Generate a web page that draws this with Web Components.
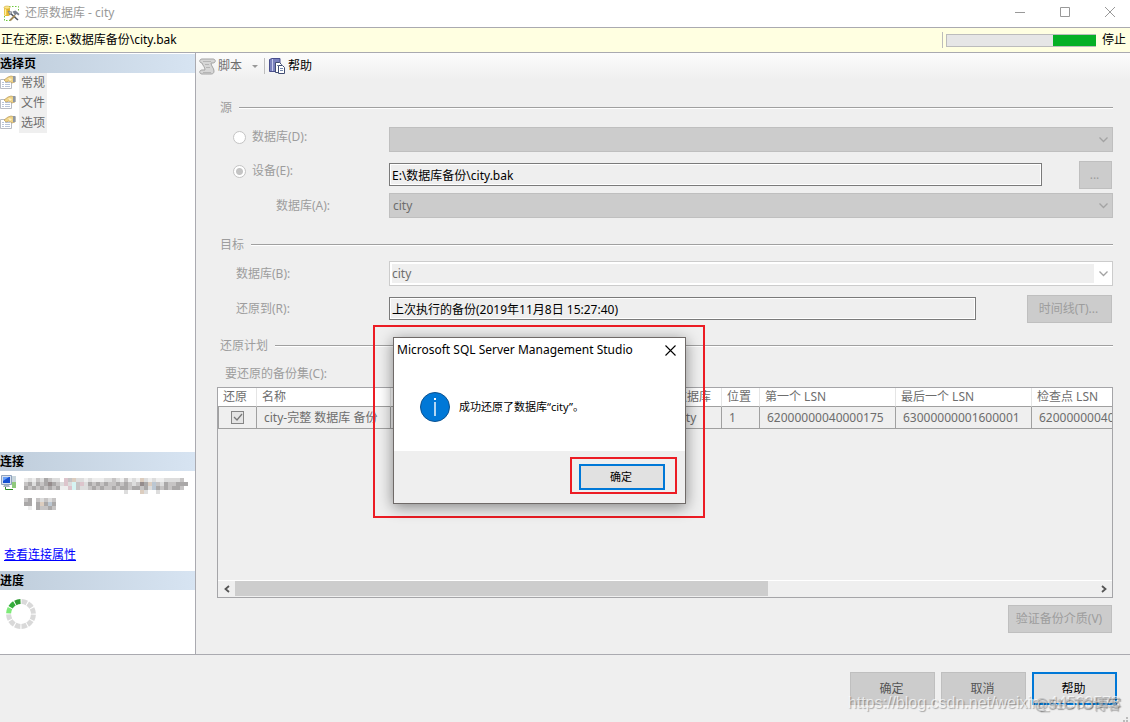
<!DOCTYPE html>
<html lang="zh-CN">
<head>
<meta charset="utf-8">
<title>还原数据库 - city</title>
<style>
  html, body { margin: 0; }
  body { font: 12px/20px "Noto Sans", "Noto Sans CJK SC", sans-serif; color: #000; background: #efefef; }
</style>
</head>
<body>
<restore-window></restore-window>

<script>
const define = (name, html, setup) => {
  const template = document.createElement('template');
  template.innerHTML = '<style>*{box-sizing:border-box}[hidden]{display:none}</style>' + html;
  customElements.define(name, class extends HTMLElement {
    constructor() {
      super();
      this.attachShadow({ mode: 'open' }).append(template.content.cloneNode(true));
      if (setup) setup(this.shadowRoot, this);
    }
  });
};

/* Window caption with its three controls */
define('title-bar', `
<style>
  :host { display: flex; align-items: center; height: 28px; background: #fff; border-bottom: 1px solid #aaaab0; color: #999; padding-left: 3px; }
  svg { display: block; }
  h1 { font: inherit; margin: 0 auto 0 5px; padding-bottom: 2px; }
  button { width: 45px; height: 27px; padding: 0 0 4px; border: 0; background: none; display: grid; place-items: center; }
  button:last-child { margin-right: -3px; width: 46px; }
</style>
<svg width="17" height="17" viewBox="0 0 17 17">
  <path d="M6 1.500H15.500V6M1.500 11V15.500H7" fill="none" stroke="#6fc83c" stroke-dasharray="1.500 1.500"/>
  <path d="M1 2.500v7c0 2 6 2 6 0v-7z" fill="#e8b92e"/><path d="M2.500 3v7" stroke="#fff0a0" stroke-width="1.500"/><ellipse cx="4" cy="2.500" rx="3" ry="1.500" fill="#fbe78a" stroke="#c99a20" stroke-width=".5"/>
  <path d="M7 8l8 7" stroke="#4c5563" stroke-width="1.600"/><path d="M9.500 6.500l3-1 4 3.500-1 1.500-2-1.500-1.500 1.500z" fill="#7a828e"/><path d="M5 6l4 1-2 3z" fill="#b9bec6" stroke="#66707c" stroke-width=".6"/><path d="M7 15.500l5-5" stroke="#a08a58" stroke-width="1.800"/>
</svg>
<h1>还原数据库 - city</h1>
<button aria-label="最小化"><svg width="10" height="10"><path d="M0 5.500H10" stroke="#999"/></svg></button>
<button aria-label="最大化"><svg width="10" height="10"><path d="M.5.5h9v9h-9z" fill="none" stroke="#999"/></svg></button>
<button aria-label="关闭"><svg width="10" height="10"><path d="M0 0L10 10M10 0L0 10" stroke="#999"/></svg></button>
`);

/* Yellow strip: what is running, and how far along it is */
define('status-strip', `
<style>
  :host { display: flex; align-items: center; height: 25px; background: #ffffe1; border-bottom: 1px solid #aaaab0; padding: 0 4px 0 1px; }
  span { flex: 1; }
  .bar { width: 154px; height: 16px; border-left: 1px solid #bcbcbc; padding-left: 3px; }
  .track { height: 13px; margin-top: 2px; border: 1px solid #bcbcbc; border-right: 0; background: linear-gradient(to right, #e6e6e6 71%, #06b025 71%); }
  button { font: inherit; border: 0; background: none; padding: 0; margin-left: 6px; }
</style>
<span><slot></slot></span>
<div class="bar"><div class="track" role="progressbar" aria-label="还原进度"></div></div>
<button>停止</button>
`);

/* Sidebar block: blue heading above whatever is passed in */
define('side-section', `
<style>
  :host { display: block; }
  h2 { margin: 0; height: 19px; font: bold 12px/19px "Noto Sans", "Noto Sans CJK SC", sans-serif; background: linear-gradient(to right, #bfcddb, #d7e4f2); }
</style>
<h2><slot name="heading"></slot></h2>
<slot></slot>
`);

define('page-link', `
<style>
  :host { display: flex; align-items: center; height: 20px; color: #6d6d6d; }
  a { color: inherit; text-decoration: none; background: #efefef; padding: 0 2px; margin-left: 3px; }
</style>
<svg width="16" height="16" viewBox="0 0 16 16">
  <path d="M.5 4.500h11v9H.5z" fill="#fff" stroke="#b8bcc4"/><path d="M2 7.500h2M5 7.500h5M2 9.500h2M5 9.500h5M2 11.500h2M5 11.500h5" stroke="#b7c4d8"/>
  <path d="M4 5l4-3 3-1 4 1v5l-3 1-3-2-3 1z" fill="#efd387" stroke="#b79a5c" stroke-width=".7"/><path d="M8 3l4 1-2 2" fill="#fff4c6"/><path d="M13 1h2.500v6H13z" fill="#8d97a3"/>
</svg>
<a href="#"><slot></slot></a>
`);

/* Server name shown as a mosaic of four-pixel cells */
define('masked-name', `
<style>:host { display: block; } svg { display: block; }</style>
<svg width="164" height="32" role="img" aria-label="已隐藏的连接名称"></svg>
`, root => {
  const shades = { a: '#eeeeee', b: '#dddddd', c: '#c6c4c4', d: '#aaa8a8', e: '#958c8c', p: '#ddc5cc', g: '#d6f4f2', h: '#dccdbf', s: '#bcc7d2' };
  const rows = [
    'abacbdcbb.pchbbabaaabbcbacabahbabaabbbbc',
    'cdbdcdedcbpbgcpbdcdcdccdcdcbcedhscbdccddd',
    'dcdcdcdcdaapgcbbcdcdccdcddcddcdbsdcdcddc',
    '.........................b...hb..b......',
    '',
    'cd.cbcbc', 'dd.dhdsd', '.a.dccdc'];
  root.querySelector('svg').innerHTML = rows.map((row, y) => [...row].map((c, x) =>
    shades[c] ? `<rect x="${x * 4}" y="${y * 4}" width="4" height="4" fill="${shades[c]}"/>` : '').join('')).join('');
});

define('progress-ring', `
<style>:host { display: block; } svg { display: block; }</style>
<svg width="30" height="30" viewBox="-15 -15 30 30" role="img" aria-label="正在进行"></svg>
`, root => {
  const colours = { 9: '#7dea77', 10: '#34ad3b', 11: '#2f9c32' };
  let html = '';
  for (let i = 0; i < 12; i++)
    html += `<path d="M.6 -12.400A12.400 12.400 0 0 1 5.800 -11" transform="rotate(${i * 30})" fill="none" stroke="${colours[i] || '#d9d9d9'}" stroke-width="5"/>`;
  root.querySelector('svg').innerHTML = html;
});

define('side-panel', `
<style>
  :host { display: flex; flex-direction: column; width: 196px; flex: none; background: #fff; border-right: 1px solid #aaaab0; padding-top: 1px; }
  .pages { flex: 1; }
  .server { display: flex; gap: 6px; padding: 4px 0 0 1px; height: 74px; }
  .server masked-name { padding-top: 3px; }
  .props { display: block; width: max-content; margin: 0 0 6px 4px; color: #00f; }
  progress-ring { margin: 9px 0 25px 6px; }
</style>
<side-section class="pages"><span slot="heading">选择页</span>
  <page-link>常规</page-link><page-link>文件</page-link><page-link>选项</page-link>
</side-section>
<side-section><span slot="heading">连接</span>
  <div class="server">
    <svg width="17" height="17" viewBox="0 0 17 17"><path d="M.5.5h10v9H.5z" fill="#d7e0ee" stroke="#8fa2bd"/><path d="M2 2h7v6H2z" fill="#1650d0"/><path d="M2 2h6L2 6z" fill="#69a2fa"/><path d="M3 10h5l1 2H2z" fill="#a6b2c2"/><path d="M11 1h4v12h-4z" fill="#c9d6dc"/><path d="M11 7h4v6h-4z" fill="#8fc97d"/><path d="M4.500 12v2.500H12" fill="none" stroke="#2b8a22"/></svg>
    <masked-name></masked-name>
  </div>
  <a class="props" href="#">查看连接属性</a>
</side-section>
<side-section><span slot="heading">进度</span><progress-ring></progress-ring></side-section>
`);

define('tool-strip', `
<style>
  :host { display: flex; align-items: center; height: 26px; padding-left: 3px; background: linear-gradient(#fcfcfc, #efefef); }
  button { display: flex; align-items: center; gap: 2px; font: inherit; border: 0; background: none; padding: 0; color: #000; }
  button:disabled { color: #6d6d6d; }
  .drop { margin: 0 6px 0 10px; }
  i { width: 1px; height: 16px; background: #bdbdbd; margin-right: 4px; }
</style>
<button disabled><svg width="17" height="17" viewBox="0 0 17 17"><path d="M3 1h11c3 0 3 4 0 4h-2c0 3 3 5 3 8 0 2-1 3-3 3H3c-3 0-3-4 0-4h3C6 9 4 8 3 5 0 5 0 1 3 1z" fill="#d6d6d6" stroke="#a4a4a4"/><path d="M4 3.500h8M6 6.500h4M7 9.500h4M4 14.500h8" stroke="#b5b5b5"/></svg>脚本</button>
<svg class="drop" width="6" height="3"><path d="M0 0h6L3 3z" fill="#999"/></svg><i></i>
<button><svg width="17" height="17" viewBox="0 0 17 17"><path d="M.5 1.500L3 .5h8v13H.5z" fill="#7980bd" stroke="#484e8c"/><path d="M3.500 1v12" stroke="#c7cbeb"/><path d="M6.500 4.500h4l2 2v8h-6z" fill="#fff" stroke="#414d73"/><path d="M9.500 7.500h4l2 2v6h-6z" fill="#fff" stroke="#414d73"/><path d="M11 10.500h3M11 12.500h3M8 7.500h1" stroke="#7588ad"/></svg>帮助</button>
`);

define('group-title', `
<style>
  :host { display: flex; align-items: center; gap: 7px; height: 20px; padding-left: 3px; color: #9d9d9d; }
  :host::after { content: ""; flex: 1; height: 2px; background: linear-gradient(#a0a0a0 50%, #fff 50%); }
</style>
<slot></slot>
`);

/* Push button; "primary" draws the blue focus frame */
define('push-button', `
<style>
  :host { display: block; height: 28px; }
  button { display: block; width: 100%; height: 100%; padding: 0 2px 0 0; font: inherit; color: inherit; border: 1px solid #bfbfbf; background: #ccc; }
  :host([primary]) button { border: 2px solid #0078d7; background: #e1e1e1; }
</style>
<button><slot></slot></button>
`, (root, host) => { root.querySelector('button').disabled = host.hasAttribute('disabled'); });

define('backup-table', `
<style>
  :host { display: flex; flex-direction: column; border: 1px solid #a5a5a8; color: #6d6d6d; min-width: 0; }
  .view { flex: 1; overflow: hidden; }
  table { border-collapse: separate; border-spacing: 0; table-layout: fixed; width: 950px; }
  th, td { font-weight: normal; text-align: left; padding: 0; border-bottom: 1px solid #a0a0a0; border-right: 1px solid #a0a0a0; white-space: nowrap; overflow: hidden; }
  th { height: 19px; line-height: 18px; background: #fff; border-right-color: #e5e5e5; padding-left: 5px; }
  td { height: 22px; line-height: 20px; padding-left: 7px; }
  td:first-child { padding: 0 0 0 12px; border-left: 1px solid #a0a0a0; }
  input { appearance: none; display: block; margin: 0; width: 13px; height: 13px; border: 1px solid #858585; background: #e4e4e4; }
  .tick { position: relative; display: block; width: 13px; }
  .tick svg { position: absolute; inset: 0; }
  .scroll { display: flex; height: 17px; border-top: 1px solid #fff; }
  .scroll button { width: 17px; border: 0; padding: 0; background: none; display: grid; place-items: center; }
  .track { flex: 1; padding-bottom: 1px; }
  .thumb { width: 62%; height: 100%; background: #cdcdcd; }
</style>
<div class="view"><table>
  <colgroup><col style="width:39px"><col style="width:134px"><col style="width:279px"><col style="width:52px"><col style="width:38px"><col style="width:136px"><col style="width:136px"><col style="width:136px"></colgroup>
  <thead><tr><th>还原</th><th>名称</th><th></th><th>数据库</th><th>位置</th><th>第一个 LSN</th><th>最后一个 LSN</th><th>检查点 LSN</th></tr></thead>
  <tbody><tr><td><label class="tick"><input type="checkbox" checked disabled aria-label="还原"><svg width="13" height="13"><path d="M3 6l3 3 5-6" fill="none" stroke="#777" stroke-width="1.300"/></svg></label></td><td>city-完整 数据库 备份</td><td></td><td>city</td><td>1</td><td>62000000040000175</td><td>63000000001600001</td><td>62000000040000175</td></tr></tbody>
</table></div>
<div class="scroll">
  <button aria-label="向左滚动"><svg width="8" height="8"><path d="M6 1L2.500 4 6 7" fill="none" stroke="#555" stroke-width="1.800"/></svg></button>
  <div class="track"><div class="thumb"></div></div>
  <button aria-label="向右滚动"><svg width="8" height="8"><path d="M2 1l3.500 3L2 7" fill="none" stroke="#555" stroke-width="1.800"/></svg></button>
</div>
`);

define('restore-form', `
<style>
  :host { display: flex; flex-direction: column; flex: 1; padding: 19px 17px 21px 21px; min-width: 0; color: #9d9d9d; }
  .row { display: flex; align-items: center; }
  .name { width: 172px; flex: none; display: flex; align-items: center; height: 20px; padding-left: 19px; }
  .radio { padding-left: 16px; gap: 6px; align-self: flex-start; }
  .deep { padding-left: 59px; }
  .source, .target { display: flex; flex-direction: column; }
  .source { gap: 4px; margin: 9px 0 17px; }
  .source .device { margin-top: 5px; }
  .target { gap: 9px; margin: 6px 0 13px; }
  input[type=radio] { appearance: none; margin: 0; width: 13px; height: 13px; border: 1px solid #c4c4c4; border-radius: 50%; background: #fff; }
  input[type=radio]:checked { background: radial-gradient(#c4c4c4 3px, #fff 4px); }
  input[type=text] { font: inherit; color: #000; height: 23px; min-width: 0; flex: 1; margin: 0 0 1px; padding: 0 2px; border: 1px solid #7a7a7a; box-shadow: inset 0 0 0 1px #fff; background: #efefef; outline: 0; }
  .combo { position: relative; flex: 1; height: 25px; }
  select { appearance: none; display: block; width: 100%; height: 100%; font: inherit; color: #6d6d6d; opacity: 1; padding: 0 20px 0 3px; border: 1px solid #bfbfbf; border-radius: 0; background: #ccc; }
  .edit select { border-color: #ccc; background: linear-gradient(to right, #efefef calc(100% - 17px), #fff 0) content-box, #fff; padding: 2px 1px 2px 2px; }
  .combo svg { position: absolute; right: 5px; top: 10px; }
  .dots { width: 33px; margin: 0 1px 0 37px; }
  .time { width: 85px; margin: 0 1px 0 51px; }
  .sets { margin: 8px 0 3px 8px; }
  backup-table { flex: 1; }
  .verify { width: 104px; margin: 7px 1px 0 auto; }
</style>
<group-title>源</group-title>
<div class="source">
  <div class="row"><label class="name radio"><input type="radio" name="src" disabled>数据库(D):</label>
    <div class="combo"><select disabled aria-label="源数据库"><option></option></select><svg width="9" height="6"><path d="M.5.5l4 4 4-4" fill="none" stroke="#a3a3a3" stroke-width="1.300"/></svg></div></div>
  <div class="row device"><label class="name radio"><input type="radio" name="src" checked disabled>设备(E):</label>
    <input type="text" readonly aria-label="设备路径" value="E:\\数据库备份\\city.bak"><push-button class="dots" disabled>...</push-button></div>
  <div class="row"><label class="name deep" for="dbA">数据库(A):</label>
    <div class="combo"><select id="dbA" disabled><option>city</option></select><svg width="9" height="6"><path d="M.5.5l4 4 4-4" fill="none" stroke="#a3a3a3" stroke-width="1.300"/></svg></div></div>
</div>
<group-title>目标</group-title>
<div class="target">
  <div class="row"><label class="name" for="dbB">数据库(B):</label>
    <div class="combo edit"><select id="dbB" disabled><option>city</option></select><svg width="9" height="6"><path d="M.5.5l4 4 4-4" fill="none" stroke="#a3a3a3" stroke-width="1.300"/></svg></div></div>
  <div class="row"><label class="name" for="to">还原到(R):</label>
    <input type="text" id="to" readonly value="上次执行的备份(2019年11月8日 15:27:40)"><push-button class="time" disabled>时间线(T)...</push-button></div>
</div>
<group-title>还原计划</group-title>
<div class="sets">要还原的备份集(C):</div>
<backup-table></backup-table>
<push-button class="verify" disabled>验证备份介质(V)</push-button>
`);

define('footer-bar', `
<style>
  :host { display: flex; justify-content: flex-end; gap: 6px; height: 68px; padding: 17px 13px 0 0; border-top: 1px solid #aaaab0; position: relative; }
  push-button { width: 85px; height: 33px; }
  push-button[disabled] { color: #555; }
  .mark { position: absolute; white-space: nowrap; pointer-events: none; }
  .blog { right: 10px; bottom: 9px; font: 16px/20px "Liberation Sans", sans-serif; color: #ffffffb0; text-shadow: 1px 1px 1px #0000004d; }
  .host { right: 9px; bottom: 8px; font: 14px/20px "Liberation Sans", "Noto Sans CJK SC", sans-serif; color: #bdbdbdb0; text-shadow: 1px 1px 1px #00000059; }
  svg { position: absolute; right: 1px; bottom: 0; }
</style>
<push-button disabled>确定</push-button><push-button disabled>取消</push-button><push-button primary>帮助</push-button>
<span class="mark blog">https://blog.csdn.net/weixin_44563573</span>
<span class="mark host">@51CTO博客</span>
<svg width="8" height="5"><path d="M5 0h2v2H5zM5 3h2v2H5zM2 3h2v2H2z" fill="#bbb"/></svg>
`);

/* Message box with the red marker frames drawn round it and its button */
define('message-box', `
<style>
  :host { position: absolute; left: 373px; top: 325px; width: 332px; border: 2px solid #ec1c24; padding: 10px 17px 12px 18px; }
  .box { background: #fff; border: 1px solid #6f6a68; box-shadow: 0 3px 14px #00000073; }
  header { display: flex; align-items: center; justify-content: space-between; height: 25px; padding: 0 9px 1px 3px; }
  header button { border: 0; background: none; padding: 0; display: grid; }
  .body { display: flex; align-items: center; gap: 9px; height: 88px; padding-left: 26px; font-size: 11px; }
  footer { display: flex; justify-content: flex-end; height: 52px; padding: 6px 8px 0 0; background: #efefef; }
  .frame { border: 2px solid #ec1c24; width: 107px; height: 37px; padding: 5px 10px 4px 7px; font-size: 11px; }
  push-button { height: 26px; }
</style>
<div class="box" role="dialog" aria-label="Microsoft SQL Server Management Studio">
  <header><span>Microsoft SQL Server Management Studio</span><button aria-label="关闭"><svg width="11" height="11"><path d="M.5.5l10 10M10.500.5l-10 10" stroke="#000" stroke-width="1.100"/></svg></button></header>
  <div class="body"><svg width="30" height="30"><circle cx="15" cy="15" r="14.500" fill="#0078d7" stroke="#0c5290"/><path d="M15 10v14" stroke="#fff" stroke-width="1.400"/><path d="M14 6h2v2h-2z" fill="#fff"/></svg><span>成功还原了数据库“city”。</span></div>
  <footer><div class="frame"><push-button primary>确定</push-button></div></footer>
</div>
`);

define('restore-window', `
<style>
  :host { display: flex; flex-direction: column; min-height: 100vh; position: relative; overflow: hidden; }
  .middle { display: flex; flex: 1; }
  main { flex: 1; min-width: 0; display: flex; flex-direction: column; }
</style>
<title-bar></title-bar>
<status-strip>正在还原: E:\\数据库备份\\city.bak</status-strip>
<div class="middle">
  <side-panel></side-panel>
  <main><tool-strip></tool-strip><restore-form></restore-form></main>
</div>
<footer-bar></footer-bar>
<message-box></message-box>
`);
</script>
</body>
</html>
